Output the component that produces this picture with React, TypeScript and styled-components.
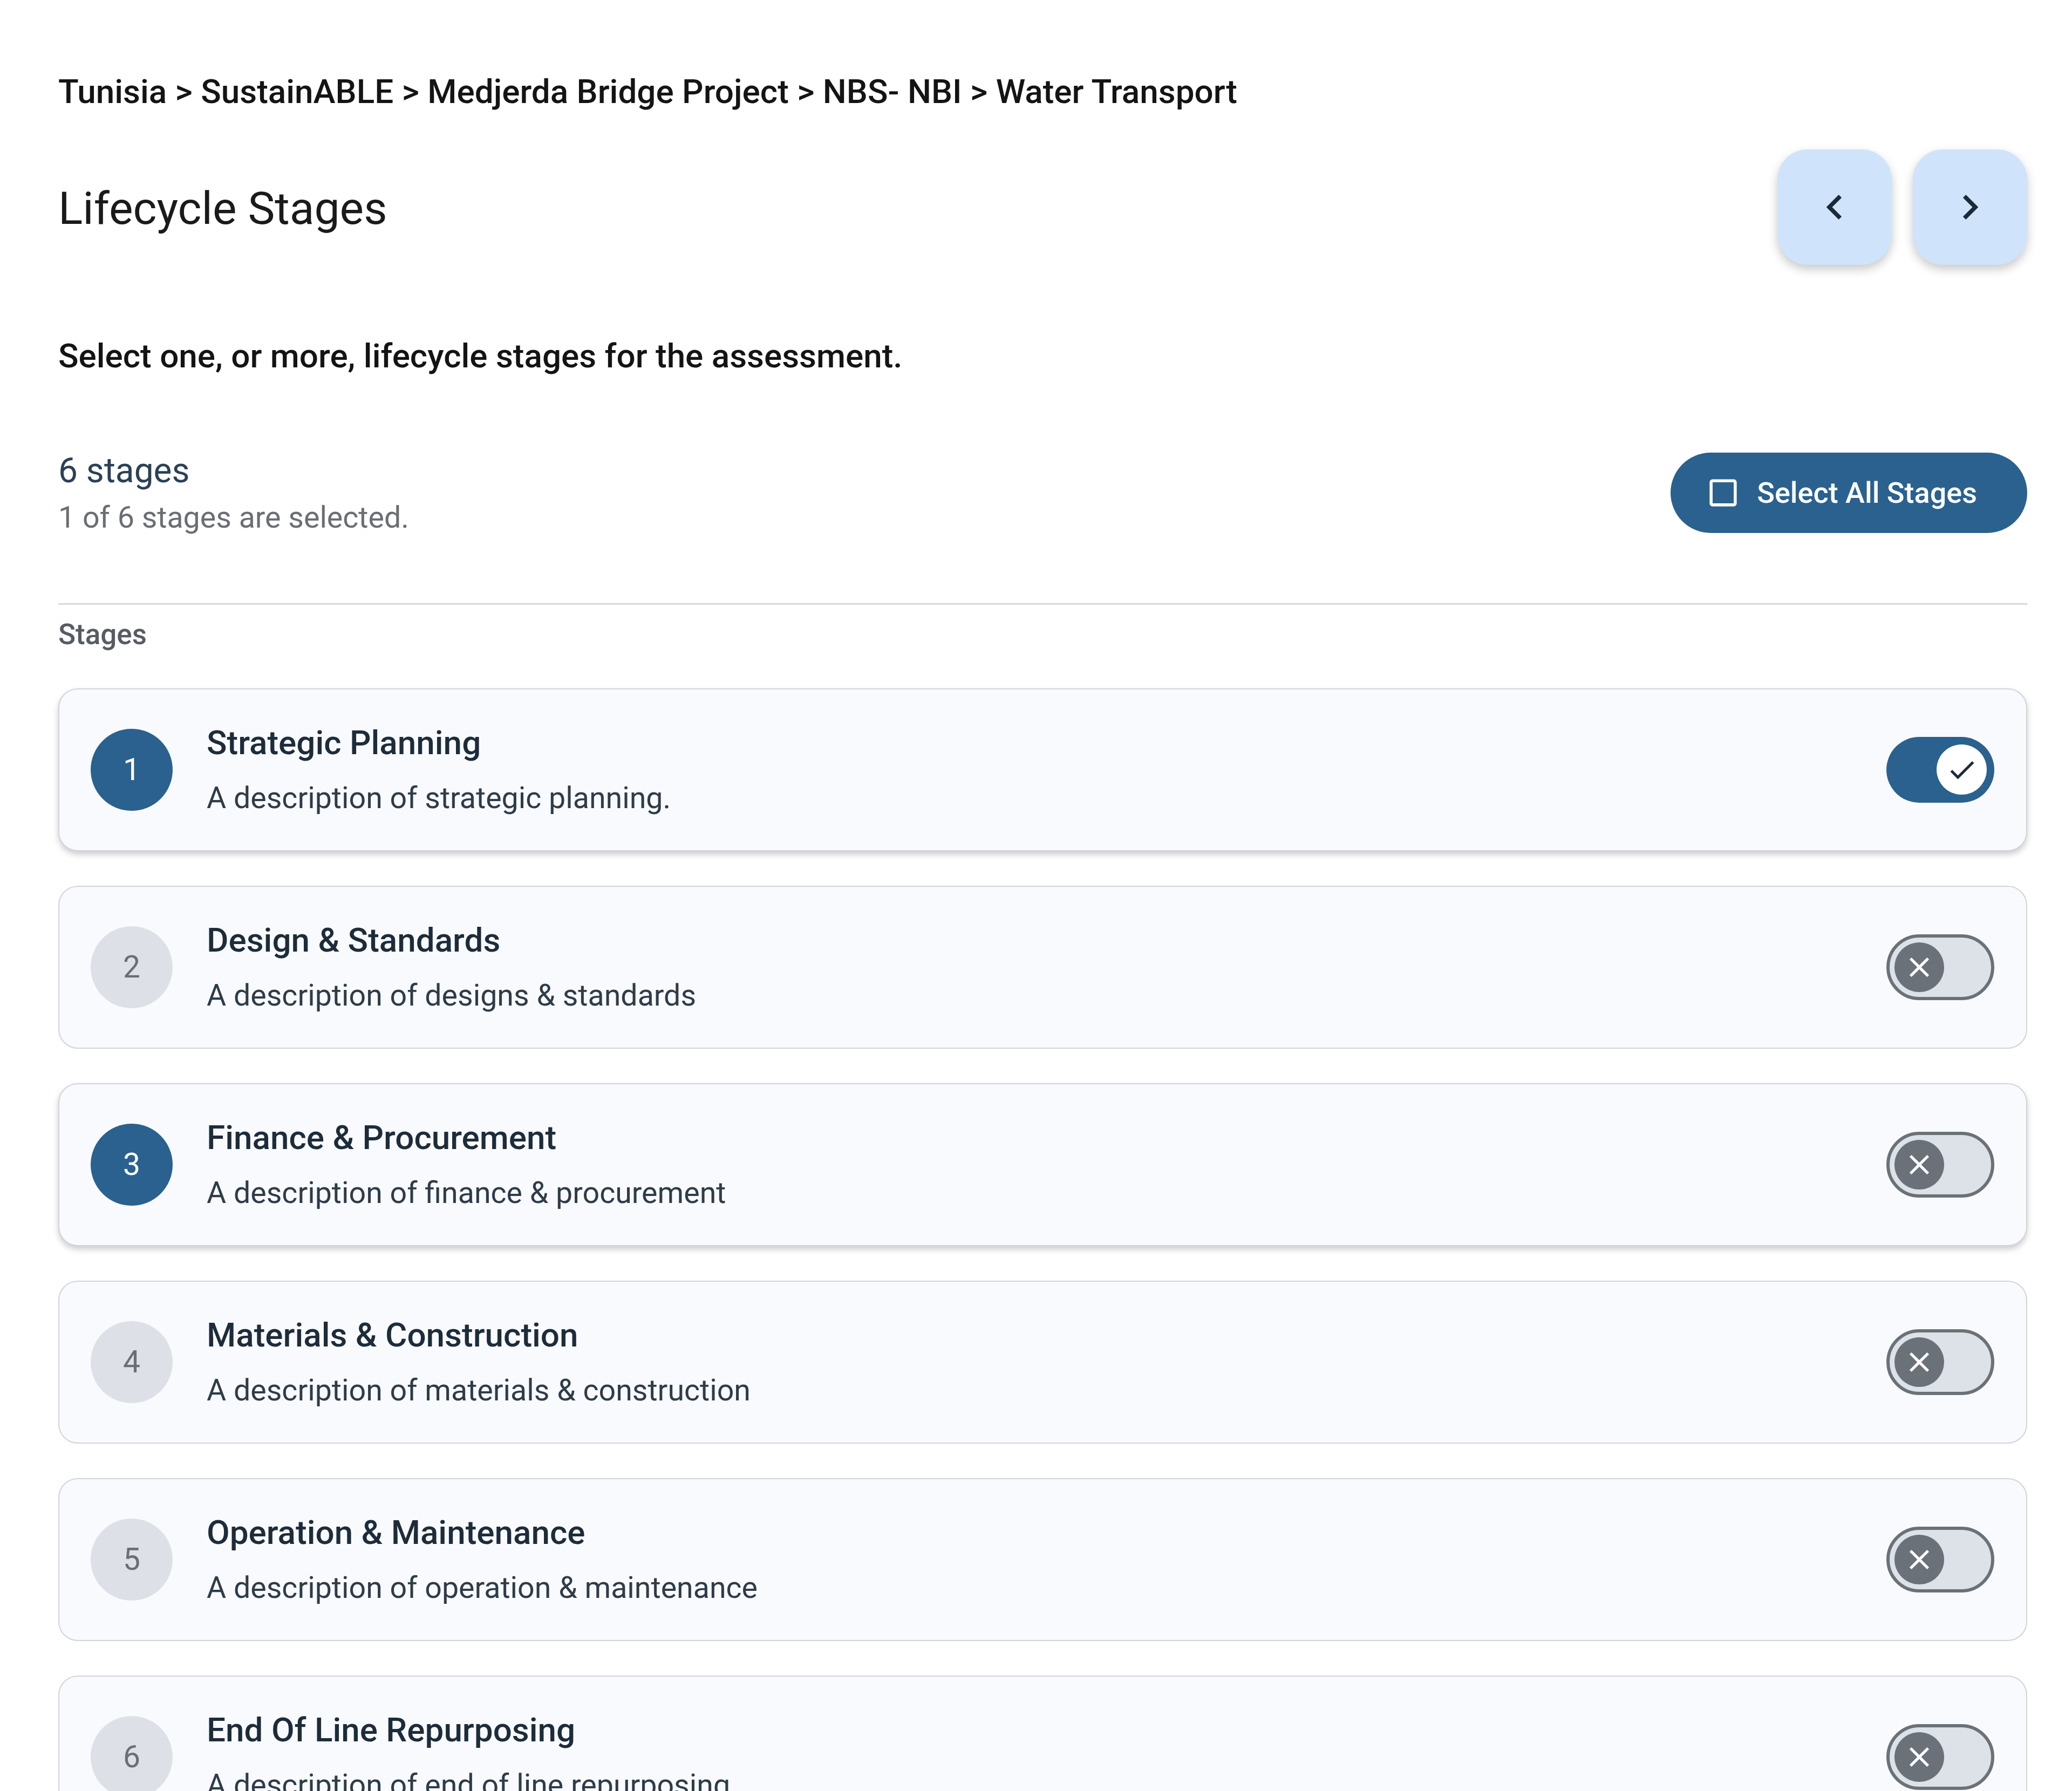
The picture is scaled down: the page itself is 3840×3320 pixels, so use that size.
import React from "react";
import styled, { createGlobalStyle } from "styled-components";
import {
  MdChevronLeft,
  MdChevronRight,
  MdCheckBoxOutlineBlank,
  MdCheck,
  MdClose,
} from "react-icons/md";

const GlobalStyle = createGlobalStyle`
  html, body {
    margin: 0;
    padding: 0;
    background: #ffffff;
  }
  body {
    font-family: Roboto, "Liberation Sans", Arial, sans-serif;
    -webkit-font-smoothing: antialiased;
  }
  * {
    box-sizing: border-box;
  }
`;

const Page = styled.main`
  display: flex;
  flex-direction: column;
  padding: 133px 83px 0 108px;
`;

const Breadcrumb = styled.nav`
  font-size: 62px;
  font-weight: 500;
  line-height: 1.2;
  color: #141414;
`;

const HeaderRow = styled.header`
  margin-top: 69px;
  height: 215px;
  display: flex;
  align-items: center;
  justify-content: space-between;
`;

const Title = styled.h1`
  margin: 8px 0 0;
  font-size: 84px;
  font-weight: 400;
  line-height: 1.2;
  color: #1a1a1a;
`;

const NavGroup = styled.div`
  display: flex;
  gap: 39px;
`;

const NavButton = styled.button`
  width: 212px;
  height: 214px;
  padding: 0;
  border: none;
  border-radius: 56px;
  background: #cfe4fa;
  box-shadow: 0 8px 18px rgba(0, 0, 0, 0.22);
  color: #1b2a38;
  display: flex;
  align-items: center;
  justify-content: center;
`;

const Instruction = styled.p`
  margin: 132px 0 0;
  font-size: 62px;
  font-weight: 500;
  line-height: 1.2;
  color: #141414;
`;

const InfoRow = styled.section`
  margin-top: 137px;
  display: flex;
  align-items: center;
  justify-content: space-between;
`;

const InfoText = styled.div`
  display: flex;
  flex-direction: column;
  gap: 15px;
`;

const StageCount = styled.div`
  font-size: 64px;
  font-weight: 400;
  line-height: 1.2;
  color: #2b4055;
`;

const SelectedNote = styled.div`
  font-size: 55.5px;
  font-weight: 400;
  line-height: 1.2;
  color: #6a6e74;
`;

const SelectAllButton = styled.button`
  height: 149px;
  padding: 0 93px 0 64px;
  border: none;
  border-radius: 75px;
  background: #2a618e;
  color: #ffffff;
  font-family: inherit;
  font-size: 54px;
  font-weight: 500;
  display: flex;
  align-items: center;
  gap: 29px;
`;

const Divider = styled.hr`
  margin: 125px 0 0;
  height: 3px;
  border: none;
  background: #d7d7df;
`;

const SectionLabel = styled.div`
  margin-top: 24px;
  font-size: 53px;
  font-weight: 500;
  line-height: 1.2;
  color: #575c62;
`;

const StageList = styled.ul`
  list-style: none;
  margin: 67px 0 0;
  padding: 0;
  display: flex;
  flex-direction: column;
  gap: 64px;
`;

const Card = styled.li<{ $raised: boolean }>`
  height: 302px;
  padding: 0 59px 0 58px;
  display: flex;
  align-items: center;
  border: 2px solid #d3d4db;
  border-radius: 36px;
  background: #f9fafd;
  box-shadow: ${(p) =>
    p.$raised ? "0 6px 12px rgba(0, 0, 0, 0.2)" : "none"};
`;

const StepCircle = styled.div<{ $active: boolean }>`
  flex: none;
  width: 152px;
  height: 152px;
  margin-right: 63px;
  border-radius: 50%;
  background: ${(p) => (p.$active ? "#2a618e" : "#dde1e7")};
  color: ${(p) => (p.$active ? "#ffffff" : "#6b6f75")};
  font-size: 57px;
  font-weight: 400;
  display: flex;
  align-items: center;
  justify-content: center;
`;

const TextCol = styled.div`
  flex: 1;
  display: flex;
  flex-direction: column;
  gap: 33px;
`;

const StageTitle = styled.div`
  font-size: 62px;
  font-weight: 500;
  line-height: 1.2;
  color: #1d2c3a;
`;

const StageDesc = styled.div`
  font-size: 55.5px;
  font-weight: 400;
  line-height: 1.2;
  color: #2e3c49;
`;

const Toggle = styled.div<{ $on: boolean }>`
  flex: none;
  width: 200px;
  height: 122px;
  border-radius: 61px;
  display: flex;
  align-items: center;
  justify-content: ${(p) => (p.$on ? "flex-end" : "flex-start")};
  background: ${(p) => (p.$on ? "#2a618e" : "#dde1e8")};
  border: ${(p) => (p.$on ? "none" : "6px solid #6b7178")};
  padding: ${(p) => (p.$on ? "0 14px" : "0 9px")};
`;

const Knob = styled.div<{ $on: boolean }>`
  width: ${(p) => (p.$on ? "93px" : "92px")};
  height: ${(p) => (p.$on ? "93px" : "92px")};
  border-radius: 50%;
  background: ${(p) => (p.$on ? "#ffffff" : "#6b7178")};
  color: ${(p) => (p.$on ? "#1d2b38" : "#ffffff")};
  display: flex;
  align-items: center;
  justify-content: center;
`;

type Stage = {
  n: number;
  title: string;
  desc: string;
  active: boolean;
  raised: boolean;
  on: boolean;
};

const stages: Stage[] = [
  { n: 1, title: "Strategic Planning", desc: "A description of strategic planning.", active: true, raised: true, on: true },
  { n: 2, title: "Design & Standards", desc: "A description of designs & standards", active: false, raised: false, on: false },
  { n: 3, title: "Finance & Procurement", desc: "A description of finance & procurement", active: true, raised: true, on: false },
  { n: 4, title: "Materials & Construction", desc: "A description of materials & construction", active: false, raised: false, on: false },
  { n: 5, title: "Operation & Maintenance", desc: "A description of operation & maintenance", active: false, raised: false, on: false },
  { n: 6, title: "End Of Line Repurposing", desc: "A description of end of line repurposing", active: false, raised: false, on: false },
];

export default function App() {
  return (
    <>
      <GlobalStyle />
      <Page>
        <Breadcrumb>
          Tunisia &gt; SustainABLE &gt; Medjerda Bridge Project &gt; NBS- NBI &gt; Water Transport
        </Breadcrumb>
        <HeaderRow>
          <Title>Lifecycle Stages</Title>
          <NavGroup>
            <NavButton aria-label="Previous">
              <MdChevronLeft size={92} />
            </NavButton>
            <NavButton aria-label="Next">
              <MdChevronRight size={92} />
            </NavButton>
          </NavGroup>
        </HeaderRow>
        <Instruction>Select one, or more, lifecycle stages for the assessment.</Instruction>
        <InfoRow>
          <InfoText>
            <StageCount>6 stages</StageCount>
            <SelectedNote>1 of 6 stages are selected.</SelectedNote>
          </InfoText>
          <SelectAllButton>
            <MdCheckBoxOutlineBlank size={67} />
            Select All Stages
          </SelectAllButton>
        </InfoRow>
        <Divider />
        <SectionLabel>Stages</SectionLabel>
        <StageList>
          {stages.map((s) => (
            <Card key={s.n} $raised={s.raised}>
              <StepCircle $active={s.active}>{s.n}</StepCircle>
              <TextCol>
                <StageTitle>{s.title}</StageTitle>
                <StageDesc>{s.desc}</StageDesc>
              </TextCol>
              <Toggle $on={s.on}>
                <Knob $on={s.on}>
                  {s.on ? <MdCheck size={60} /> : <MdClose size={62} />}
                </Knob>
              </Toggle>
            </Card>
          ))}
        </StageList>
      </Page>
    </>
  );
}
